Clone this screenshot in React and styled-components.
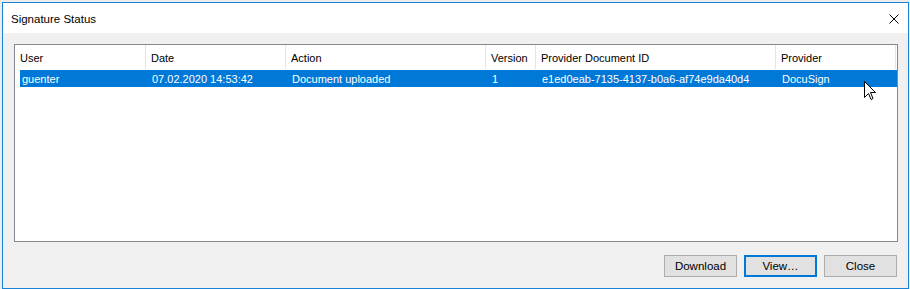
import React from 'react';
import styled, { createGlobalStyle } from 'styled-components';

const GlobalStyle = createGlobalStyle`
  html, body {
    margin: 0;
    padding: 0;
    background: #ececec;
    font-family: "Segoe UI", "Liberation Sans", Arial, sans-serif;
    font-size: 11px;
    color: #000;
  }
`;

const Page = styled.div`
  padding: 2px 0 0 2px;
  width: 910px;
  height: 289px;
  box-sizing: border-box;
`;

const Window = styled.div`
  position: relative;
  width: 907px;
  height: 287px;
  box-sizing: border-box;
  border: 1px solid #1883d7;
  background: #f0f0f0;
  display: flex;
  flex-direction: column;
`;

const TitleBar = styled.div`
  height: 30px;
  background: #fff;
  display: flex;
  align-items: center;
  justify-content: space-between;
  padding: 0 9px 0 8px;
`;

const Title = styled.span`
  font-size: 11.5px;
  padding-top: 1px;
`;

const CloseGlyph = styled.svg`
  width: 10px;
  height: 10px;
  margin-top: 1px;
`;

const Body = styled.div`
  flex: 1;
  display: flex;
  flex-direction: column;
  padding: 11px 10px 11px 11px;
`;

const ListBox = styled.div`
  height: 198px;
  box-sizing: border-box;
  border: 1px solid #828790;
  background: #fff;
`;

const HeaderRow = styled.div`
  display: grid;
  grid-template-columns: 131px 140px 200px 50px 240px 120px;
  height: 24px;
`;

const HeaderCell = styled.div`
  display: flex;
  align-items: center;
  padding-left: 5px;
  padding-top: 1px;
  border-right: 1px solid #e5e5e5;
  white-space: nowrap;
  overflow: hidden;
`;

const DataRow = styled.div`
  display: grid;
  grid-template-columns: 126px 140px 200px 50px 240px 121px;
  height: 17px;
  margin: 1px 0 0 5px;
  background: ${p => (p.$selected ? '#0078d7' : 'transparent')};
  color: ${p => (p.$selected ? '#fff' : '#000')};
`;

const DataCell = styled.div`
  display: flex;
  align-items: center;
  padding-left: ${p => (p.$first ? '2px' : '6px')};
  white-space: nowrap;
  overflow: hidden;
`;

const ButtonBar = styled.div`
  display: flex;
  justify-content: flex-end;
  gap: 7px;
  margin-top: 13px;
  padding-right: 1px;
`;

const Button = styled.div`
  width: 73px;
  height: 22px;
  box-sizing: border-box;
  border: ${p => (p.$focused ? '2px solid #0078d7' : '1px solid #adadad')};
  background: #e1e1e1;
  display: flex;
  align-items: center;
  justify-content: center;
  font-size: 11.5px;
`;

const Cursor = styled.svg`
  position: absolute;
  left: 861px;
  top: 78px;
  width: 13px;
  height: 20px;
`;

const headers = ['User', 'Date', 'Action', 'Version', 'Provider Document ID', 'Provider'];

const rows = [
  ['guenter', '07.02.2020 14:53:42', 'Document uploaded', '1', 'e1ed0eab-7135-4137-b0a6-af74e9da40d4', 'DocuSign'],
];

export default function App() {
  return (
    <Page>
      <GlobalStyle />
      <Window>
        <TitleBar>
          <Title>Signature Status</Title>
          <CloseGlyph viewBox="0 0 10 10">
            <path d="M0.5 0.5 L9.5 9.5 M9.5 0.5 L0.5 9.5" stroke="#000" strokeWidth="1" fill="none" />
          </CloseGlyph>
        </TitleBar>
        <Body>
          <ListBox>
            <HeaderRow>
              {headers.map(h => (
                <HeaderCell key={h}>{h}</HeaderCell>
              ))}
            </HeaderRow>
            {rows.map((r, i) => (
              <DataRow key={i} $selected>
                {r.map((c, j) => (
                  <DataCell key={j} $first={j === 0}>{c}</DataCell>
                ))}
              </DataRow>
            ))}
          </ListBox>
          <ButtonBar>
            <Button>Download</Button>
            <Button $focused>View…</Button>
            <Button>Close</Button>
          </ButtonBar>
        </Body>
        <Cursor viewBox="0 0 13 20">
          <path d="M0.5 0.5 L0.5 16.5 L4.5 12.5 L7 18.5 L9 17.5 L6.5 11.5 L11.5 11.5 Z" fill="#fff" stroke="#000" strokeWidth="1" strokeLinejoin="miter" />
        </Cursor>
      </Window>
    </Page>
  );
}
